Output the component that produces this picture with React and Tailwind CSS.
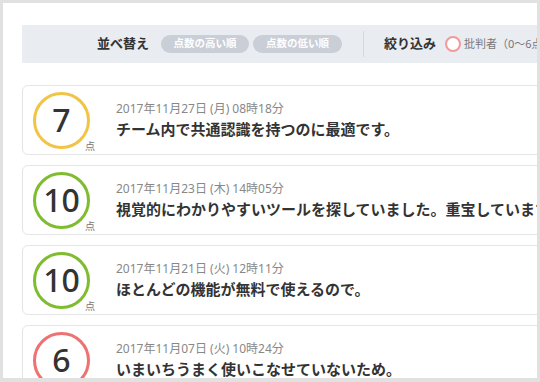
const reviews = [
  { score: 7, color: 'border-[#f2c444]', date: '2017年11月27日 (月) 08時18分', text: 'チーム内で共通認識を持つのに最適です。' },
  { score: 10, color: 'border-[#80bc2f]', date: '2017年11月23日 (木) 14時05分', text: '視覚的にわかりやすいツールを探していました。重宝しています。' },
  { score: 10, color: 'border-[#80bc2f]', date: '2017年11月21日 (火) 12時11分', text: 'ほとんどの機能が無料で使えるので。' },
  { score: 6, color: 'border-[#ef7272]', date: '2017年11月07日 (火) 10時24分', text: 'いまいちうまく使いこなせていないため。' },
]

function App() {
  return (
    <div className="w-[540px] h-[382px] bg-[#e1e1e1] pt-[3px] pl-[3px] pr-[3px] pb-[4px] font-['Noto_Sans','Noto_Sans_CJK_JP',sans-serif]">
      <div className="w-full h-full bg-white overflow-hidden pl-[19px] pt-[22px]">
        <div className="w-[720px]">
          {/* Filter bar */}
          <div className="h-[38px] bg-[#e9ecf1] flex items-center pl-[75px]">
            <span className="text-[13px] font-bold text-[#333] mr-[12px]">並べ替え</span>
            <span className="h-[18px] w-[88px] rounded-full bg-[#c9ced7] text-white text-[10.5px] font-semibold flex items-center justify-center mr-[4px]">点数の高い順</span>
            <span className="h-[18px] w-[89px] rounded-full bg-[#c9ced7] text-white text-[10.5px] font-semibold flex items-center justify-center">点数の低い順</span>
            <div className="w-px h-[26px] bg-[#d3d7de] ml-[21px] mr-[20px]"></div>
            <span className="text-[13px] font-bold text-[#333] mr-[9px]">絞り込み</span>
            <span className="w-[16px] h-[16px] rounded-full border-2 border-[#f09a9a] bg-white mr-[3px]"></span>
            <span className="text-[11px] text-[#777]">批判者（0〜6点）</span>
          </div>

          {/* Review list */}
          <div className="mt-[22px] flex flex-col gap-[10px]">
            {reviews.map((r, i) => (
              <div key={i} className="h-[70px] border border-[#e4e4e4] rounded-[6px] flex items-center pl-[10px]">
                <div className="relative">
                  <div className={`w-[57px] h-[57px] rounded-full border-[3px] ${r.color} flex items-center justify-center text-[32px] font-medium text-[#333] leading-none`}>
                    {r.score}
                  </div>
                  <span className="absolute left-[52px] bottom-[-2px] text-[10px] text-[#777] leading-none">点</span>
                </div>
                <div className="ml-[26px] flex flex-col">
                  <span className="text-[12px] text-[#888] leading-[16px]">{r.date}</span>
                  <span className="text-[15px] font-bold text-[#333] leading-[22px] mt-[1px] whitespace-nowrap">{r.text}</span>
                </div>
              </div>
            ))}
          </div>
        </div>
      </div>
    </div>
  )
}

export default App
